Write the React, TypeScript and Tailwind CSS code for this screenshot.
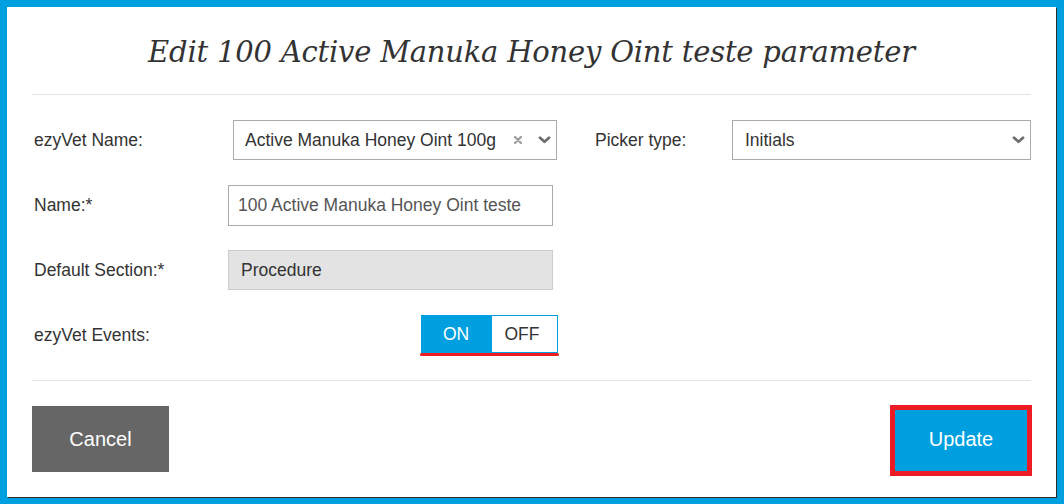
import React, { useState } from 'react';

const Chevron = () => (
    <svg width="13" height="8" viewBox="0 0 13 8" className="shrink-0">
        <path d="M2 1.8 L6.5 5.8 L11 1.8" fill="none" stroke="#6e6e6e" strokeWidth="2.8" strokeLinecap="round" strokeLinejoin="round" />
    </svg>
);

const Clear = () => (
    <svg width="10" height="10" viewBox="0 0 10 10" className="shrink-0">
        <path d="M2 2 L8 8 M8 2 L2 8" fill="none" stroke="#a0a0a0" strokeWidth="2.4" strokeLinecap="round" />
    </svg>
);

const Label = ({ children }: { children: React.ReactNode }) => (
    <div className="w-[196px] shrink-0 pl-[2px] text-[17.5px] text-[#333]">{children}</div>
);

export default function App() {
    const [events, setEvents] = useState(true);

    return (
        <div className="w-[1064px] h-[504px] bg-[#009fe0] p-[7px] overflow-hidden font-['Liberation_Sans',Arial,sans-serif]">
            <div className="w-[1049px] h-[490px] bg-white shadow-[1px_1px_0_#2a2a2a] px-[25px] flex flex-col">

                <div className="h-[88px] shrink-0 border-b border-[#e3e3e3] flex items-center justify-center pt-[4px]">
                    <h1 className="font-['DejaVu_Serif',Georgia,serif] italic text-[29px] text-[#333] tracking-[-0.2px]">
                        Edit 100 Active Manuka Honey Oint teste parameter
                    </h1>
                </div>

                <div className="h-[286px] shrink-0 border-b border-[#e3e3e3] pt-[25px] flex gap-[38px]">
                    <div className="w-[525px] flex flex-col gap-[25px]">
                        <div className="h-[40px] flex items-center">
                            <Label>ezyVet Name:</Label>
                            <div className="ml-[5px] w-[325px] h-[40px] border border-[#aaa] flex items-center pl-[11px] pr-[5px] text-[17.5px] text-[#333]">
                                <span className="flex-1 truncate">Active Manuka Honey Oint 100g</span>
                                <Clear />
                                <span className="ml-[15px]"><Chevron /></span>
                            </div>
                        </div>
                        <div className="h-[40px] flex items-center">
                            <Label>Name:*</Label>
                            <input
                                defaultValue="100 Active Manuka Honey Oint teste"
                                className="w-[325px] h-[41px] border border-[#aaa] px-[9px] text-[17.5px] text-[#555] outline-none"
                            />
                        </div>
                        <div className="h-[40px] flex items-center">
                            <Label>Default Section:*</Label>
                            <div className="w-[325px] h-[40px] border border-[#ccc] bg-[#e3e3e3] flex items-center px-[12px] text-[17.5px] text-[#333]">
                                Procedure
                            </div>
                        </div>
                        <div className="h-[40px] flex items-center">
                            <Label>ezyVet Events:</Label>
                            <div className="ml-auto mr-[-1px] self-start flex flex-col">
                                <div className="flex w-[137px] h-[38px] border border-[#009fe0] text-[17.5px]">
                                    <button
                                        onClick={() => setEvents(true)}
                                        className={`w-[70px] h-full flex items-center justify-center pr-[2px] ${events ? 'bg-[#009fe0] text-white' : 'bg-white text-[#333]'}`}
                                    >
                                        ON
                                    </button>
                                    <button
                                        onClick={() => setEvents(false)}
                                        className={`flex-1 h-full flex items-center justify-center pr-[5px] ${!events ? 'bg-[#009fe0] text-white' : 'bg-white text-[#333]'}`}
                                    >
                                        OFF
                                    </button>
                                </div>
                                <div className="h-[3px] -mx-[1px] w-[139px] bg-[#ed1c24] rounded-full"></div>
                            </div>
                        </div>
                    </div>

                    <div className="flex-1">
                        <div className="h-[40px] flex items-center">
                            <div className="w-[137px] shrink-0 text-[17.5px] text-[#333]">Picker type:</div>
                            <div className="flex-1 h-[40px] border border-[#aaa] flex items-center pl-[12px] pr-[5px] text-[17.5px] text-[#333]">
                                <span className="flex-1">Initials</span>
                                <Chevron />
                            </div>
                        </div>
                    </div>
                </div>

                <div className="flex items-start justify-between pt-[24px]">
                    <button className="mt-[1px] w-[137px] h-[66px] bg-[#666] text-white text-[20px]">Cancel</button>
                    <button className="mr-[-1px] w-[142px] h-[71px] border-[5px] border-[#ed1c24] bg-[#009fe0] text-white text-[20px] pb-[3px]">Update</button>
                </div>
            </div>
        </div>
    );
}
